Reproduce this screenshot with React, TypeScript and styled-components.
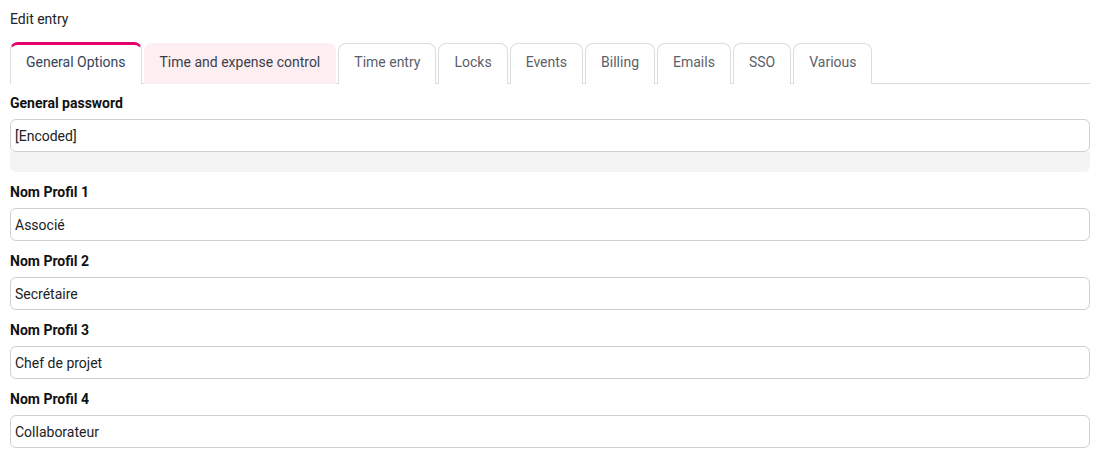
import React, { useState } from 'react';
import styled, { createGlobalStyle, css } from 'styled-components';

const GlobalStyle = createGlobalStyle`
  body {
    margin: 0;
    background: #ffffff;
    font-family: Roboto, "Liberation Sans", Arial, sans-serif;
    color: #222222;
  }
`;

const Page = styled.div`
  padding: 10px 10px 0 10px;
`;

const Title = styled.div`
  font-size: 14px;
  line-height: 18px;
  color: #222;
  margin-bottom: 14px;
`;

const TabBar = styled.div`
  display: flex;
  align-items: flex-end;
  gap: 2px;
  border-bottom: 1px solid #dcdcdc;
  height: 41px;
`;

const Tab = styled.button<{ $active?: boolean; $hover?: boolean }>`
  height: 41px;
  box-sizing: border-box;
  padding: 0 15px 4px 15px;
  margin-bottom: -1px;
  font-family: Roboto, "Liberation Sans", Arial, sans-serif;
  font-size: 14px;
  color: #5c5f6a;
  background: #ffffff;
  border: 1px solid #dddddd;
  border-bottom: none;
  border-radius: 8px 8px 0 0;
  cursor: pointer;
  white-space: nowrap;

  ${(p) =>
    p.$hover &&
    css`
      background: #fdeef1;
      border-color: #fdeef1;
      color: #3b3f4a;
    `}

  ${(p) =>
    p.$active &&
    css`
      border-top: 3px solid #e5006d;
      color: #364459;
      padding-bottom: 5px;
      height: 42px;
    `}
`;

const Form = styled.div`
  display: flex;
  flex-direction: column;
`;

const Field = styled.div<{ $first?: boolean }>`
  display: flex;
  flex-direction: column;
  padding-top: ${(p) => (p.$first ? '11px' : '12px')};
`;

const Label = styled.label`
  font-size: 14px;
  font-weight: 700;
  line-height: 17px;
  color: #111;
  margin-bottom: 7px;
`;

const Input = styled.input`
  box-sizing: border-box;
  height: 33px;
  width: 100%;
  padding: 0 4px;
  font-family: Roboto, "Liberation Sans", Arial, sans-serif;
  font-size: 14px;
  color: #222;
  background: #fff;
  border: 1px solid #cfcfd4;
  border-radius: 6px;
  outline: none;
`;

const Hint = styled.div`
  height: 20px;
  background: #f4f4f4;
  border-radius: 0 0 6px 6px;
`;

const tabs = [
  'General Options',
  'Time and expense control',
  'Time entry',
  'Locks',
  'Events',
  'Billing',
  'Emails',
  'SSO',
  'Various',
];

const profiles = [
  { label: 'Nom Profil 1', value: 'Associé' },
  { label: 'Nom Profil 2', value: 'Secrétaire' },
  { label: 'Nom Profil 3', value: 'Chef de projet' },
  { label: 'Nom Profil 4', value: 'Collaborateur' },
];

export default function App() {
  const [active, setActive] = useState(0);

  return (
    <Page>
      <GlobalStyle />
      <Title>Edit entry</Title>
      <TabBar>
        {tabs.map((t, i) => (
          <Tab key={t} $active={i === active} $hover={i === 1} onClick={() => setActive(i)}>
            {t}
          </Tab>
        ))}
      </TabBar>
      <Form>
        <Field $first>
          <Label>General password</Label>
          <Input defaultValue="[Encoded]" />
          <Hint />
        </Field>
        {profiles.map((p) => (
          <Field key={p.label}>
            <Label>{p.label}</Label>
            <Input defaultValue={p.value} />
          </Field>
        ))}
      </Form>
    </Page>
  );
}
